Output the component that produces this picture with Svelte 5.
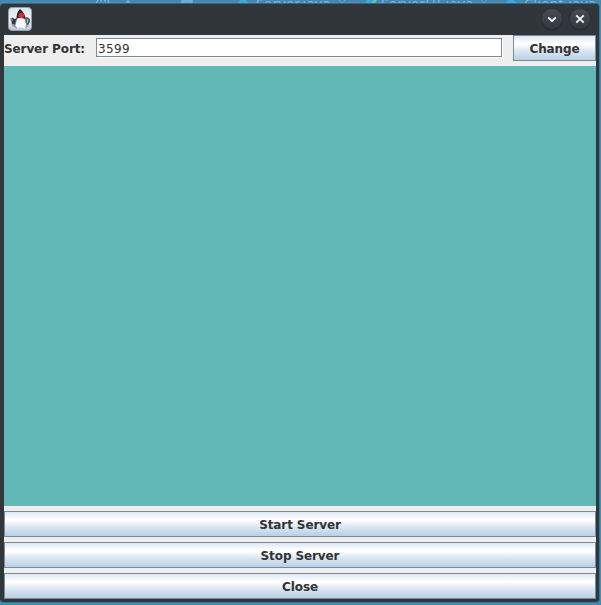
<script>
  let port = $state('3599');
  const actions = ['Start Server', 'Stop Server', 'Close'];
</script>

<div class="desktop">
  <div class="behind">
    <svg width="601" height="4" viewBox="0 0 601 4">
      <path d="M98 0l-2 3M101 0v2M105 0v2M108 0l1 3M126 3l2-2 2 2M182 1h10v2h-10z" fill="none" stroke="#80b9d8" stroke-width="1.3" />
      <circle cx="243" cy="5" r="5.5" fill="#3ba9dc" />
      <circle cx="370" cy="5" r="5.5" fill="#3ba9dc" />
      <path d="M371 3l3-3h3l-2 3z" fill="#65c99a" />
      <circle cx="511" cy="5" r="5.5" fill="#3ba9dc" />
      <path d="M339 0l3 3 3-3M481 0l3 3 3-3" fill="none" stroke="#6d9db9" />
    </svg>
    <span class="tab" style:left="256px">Server.java</span>
    <span class="tab" style:left="381px">ServerUI.java</span>
    <span class="tab" style:left="524px">Client.java</span>
  </div>
  <main class="window">
    <header>
      <svg class="logo" width="24" height="24" viewBox="0 0 24 24">
        <defs>
          <linearGradient id="tile" x2="0" y2="1"><stop stop-color="#dce3ea" /><stop offset=".5" stop-color="#f0f3f5" /><stop offset="1" stop-color="#bdc9d4" /></linearGradient>
        </defs>
        <rect x=".5" y=".5" width="23" height="23" rx="3.5" fill="url(#tile)" stroke="#8ba1b4" />
        <path d="M3 17h18l-1 3H5z" fill="#a4a8ac" />
        <path d="M10 10l-3 2-3-1.5-1 2L4 17l5 1z" fill="#34393e" />
        <path d="M2 11l3 1v2l-2-.5z" fill="#4b8bae" />
        <path d="M16 11l3-1 3 2v3l-2 3-3-1z" fill="#4e5964" />
        <path d="M18.5 12l1.5 1-1 3" fill="none" stroke="#b9cad8" />
        <path d="M9.5 9L7 18q-.5 3.5 2 3l3.5-1 5 1.5q2-1 .5-6L16.5 9z" fill="#f7f7f6" />
        <path d="M12 2Q8.5 5 8.5 12l3-1.5 6 1.5Q17 6 12 2z" fill="#242628" />
        <path d="M8.5 12L7 18q-.5 3 2 3M17 12q2.5 6 1 9" fill="none" stroke="#6e7276" stroke-width=".8" />
        <circle cx="13.3" cy="8.5" r="2.7" fill="#e3292b" />
      </svg>
      <div class="controls">
        <button class="round" aria-label="Minimize"><svg width="20" height="20" viewBox="0 0 20 20"><path d="M6.2 8.5l3.8 3.5 3.8-3.5" /></svg></button>
        <button class="round" aria-label="Close window"><svg width="20" height="20" viewBox="0 0 20 20"><path d="M6.3 6.3l7.4 7.4M13.7 6.3l-7.4 7.4" /></svg></button>
      </div>
    </header>
    <section class="content">
      <div class="port">
        <label for="port">Server Port:</label>
        <input id="port" bind:value={port} />
        <button class="metal">Change</button>
      </div>
      <div class="log"></div>
      <div class="actions">
        {#each actions as action}
          <button class="metal">{action}</button>
        {/each}
      </div>
    </section>
  </main>
</div>

<style>
  :global(body) { overflow: hidden; }
  .desktop {
    position: relative;
    box-sizing: border-box;
    width: 601px;
    height: 605px;
    padding: 3px 1px 2px 0;
    overflow: hidden;
    background: #4187ad;
    font: 12px "DejaVu Sans", sans-serif;
  }
  .behind { position: absolute; top: 0; left: 0; width: 601px; height: 4px; background: #4985ab; }
  .behind svg { display: block; }
  .tab { position: absolute; top: -3px; color: #80b9d8; font: 14px/14px "Noto Sans", sans-serif; letter-spacing: .4px; white-space: nowrap; }
  .window {
    position: relative;
    box-sizing: border-box;
    width: 600px;
    height: 600px;
    padding: 0 4px 4px;
    border-top: 1px solid #396681;
    border-right: 1px solid #397796;
    border-bottom: 1px solid #397796;
    border-radius: 4px;
    background: #31363b;
    box-shadow: 0 0 2px #3daee9;
  }
  header { display: flex; justify-content: space-between; height: 31px; padding: 3px 5px 0 4px; box-sizing: border-box; }
  .controls { display: flex; gap: 8px; padding-top: 2px; }
  .round { width: 20px; height: 20px; padding: 0; border: 0; border-radius: 50%; background: linear-gradient(#484d54, #33383e); box-shadow: 0 1px 2px #202428; }
  .round svg { display: block; fill: none; stroke: #f5f6f7; stroke-width: 1.8; }
  .content { display: flex; flex-direction: column; width: 592px; height: 564px; background: #eee; }
  .port { display: flex; height: 31px; align-items: flex-start; }
  label { width: 92px; color: #333; font-weight: bold; line-height: 29px; letter-spacing: -.1px; white-space: nowrap; }
  input {
    box-sizing: border-box;
    width: 406px;
    height: 19px;
    margin: 3px 11px 0 0;
    padding: 2px 0 0 1px;
    border: 1px solid #7a8a99;
    border-radius: 0;
    outline: 0;
    background: #fff;
    box-shadow: 1px 1px #fff;
    color: #333;
    font: 12px "DejaVu Sans", sans-serif;
    letter-spacing: .37px;
  }
  .metal {
    box-sizing: border-box;
    height: 26px;
    padding: 2px 0 0;
    border: 1px solid #7a8a99;
    border-radius: 0;
    background: linear-gradient(#dde8f3, #fff 30%, #fff 34%, #dde8f3 60%, #b8cfe5);
    color: #333;
    font: bold 12px "DejaVu Sans", sans-serif;
    letter-spacing: -.1px;
  }
  .port .metal { width: 83px; }
  .log { height: 440px; background: #61b8b7; }
  .actions { display: flex; flex-direction: column; gap: 5px; padding-top: 5px; }
</style>
